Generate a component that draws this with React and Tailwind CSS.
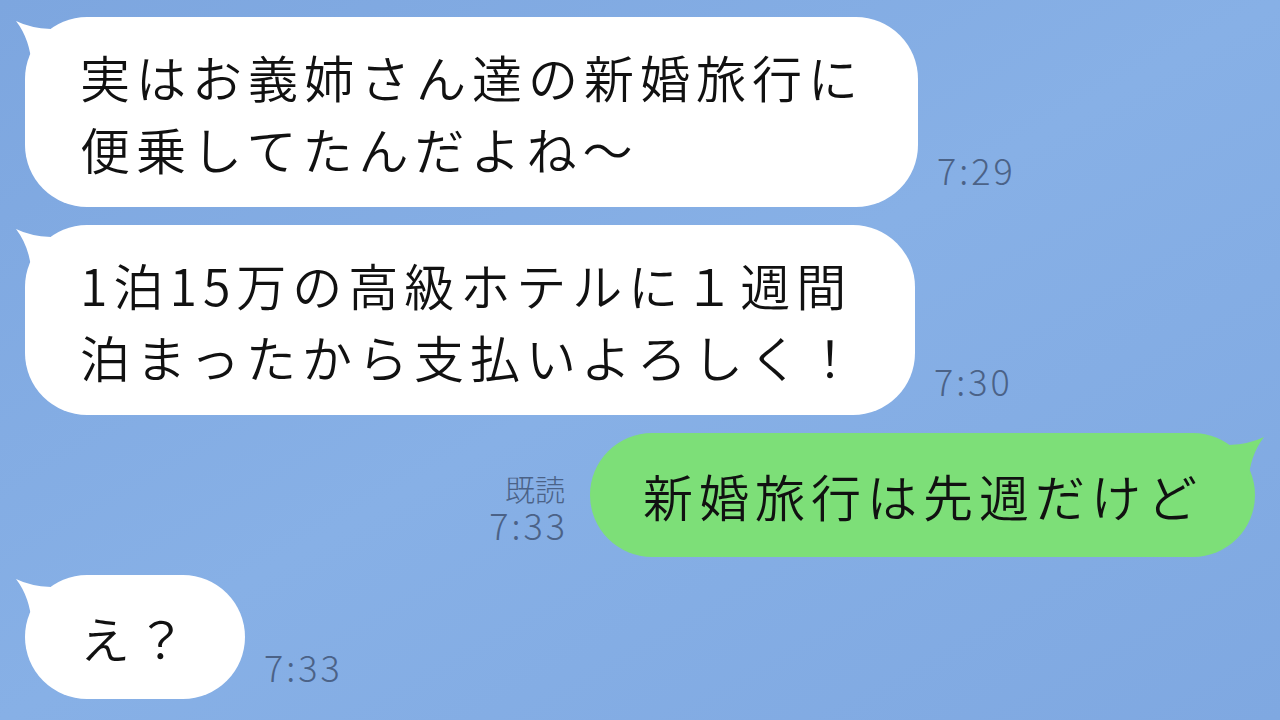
const jp = { fontFamily: '"Noto Sans CJK JP", "Noto Sans", sans-serif' };

function LeftTail() {
  return (
    <svg
      className="absolute -left-[10px] top-0"
      width="40"
      height="56"
      viewBox="0 0 40 56"
    >
      <path d="M1 4 Q15 11 36 12 L36 56 L17 56 L17 50 Q15 22 1 4 Z" fill="#ffffff" />
    </svg>
  );
}

function RightTail() {
  return (
    <svg
      className="absolute -right-[10px] top-0"
      width="40"
      height="56"
      viewBox="0 0 40 56"
    >
      <path d="M39 4 Q25 11 4 12 L4 56 L23 56 L23 50 Q25 22 39 4 Z" fill="#7ddf78" />
    </svg>
  );
}

function Time({ children, mb }) {
  return (
    <span
      className={`text-[36px] font-light leading-none tracking-[3px] text-[#4b6287] ${mb}`}
      style={jp}
    >
      {children}
    </span>
  );
}

function LeftMessage({ lines, time, mb, pr = "pr-[54px]", py = "py-[23px]" }) {
  return (
    <div className="flex items-end gap-[19px]">
      <div
        className={`relative bg-white rounded-[62px] pl-[55px] ${pr} ${py} text-[50px] font-[350] leading-[72px] tracking-[6px] text-[#111111] whitespace-nowrap`}
        style={jp}
      >
        <LeftTail />
        <div className="relative">
          {lines.map((l) => (
            <div key={l}>{l}</div>
          ))}
        </div>
      </div>
      <Time mb={mb}>{time}</Time>
    </div>
  );
}

export default function App() {
  return (
    <div className="w-[1280px] h-[720px] overflow-hidden bg-gradient-to-br from-[#7da6df] via-[#87b0e6] to-[#7fa8e1]">
      <div className="flex flex-col pt-[17px] pl-[25px] pr-[25px] gap-[18px]">
        <LeftMessage
          lines={["実はお義姉さん達の新婚旅行に", "便乗してたんだよね〜"]}
          time="7:29"
          mb="mb-[20px]"
        />
        <LeftMessage
          lines={["1泊15万の高級ホテルに１週間", "泊まったから支払いよろしく！"]}
          time="7:30"
          mb="mb-[17px]"
        />

        <div className="flex items-end justify-end gap-[25px]">
          <div className="flex flex-col items-end mb-[13px] text-[#4b6287] font-light" style={jp}>
            <span className="text-[30px] leading-[32px]">既読</span>
            <span className="text-[36px] leading-[40px] tracking-[3px] -mr-[3px]">7:33</span>
          </div>
          <div
            className="relative bg-[#7ddf78] rounded-[62px] pl-[53px] pr-[52px] py-[26px] text-[50px] font-[350] leading-[72px] tracking-[6px] text-[#111111] whitespace-nowrap"
            style={jp}
          >
            <RightTail />
            <div className="relative">新婚旅行は先週だけど</div>
          </div>
        </div>

        <LeftMessage lines={["え？"]} time="7:33" mb="mb-[15px]" pr="pr-[53px]" py="py-[26px]" />
      </div>
    </div>
  );
}
